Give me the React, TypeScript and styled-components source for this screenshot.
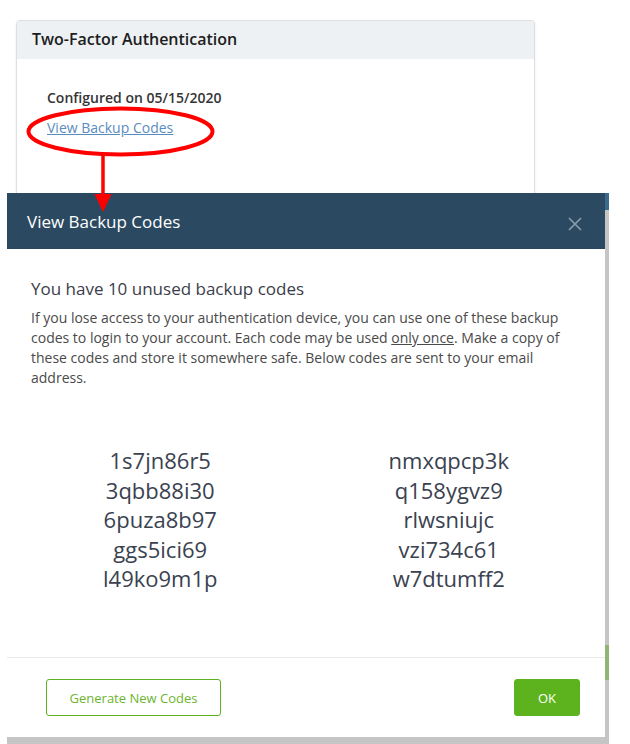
import React from 'react';
import styled, { createGlobalStyle } from 'styled-components';

const GlobalStyle = createGlobalStyle`
  html, body {
    margin: 0;
    padding: 0;
    background: #ffffff;
  }
  body {
    font-family: 'Open Sans', 'Liberation Sans', sans-serif;
  }
`;

const Page = styled.div`
  position: relative;
  width: 630px;
  height: 744px;
  overflow: hidden;
  background: #ffffff;
`;

const Card = styled.div`
  box-sizing: border-box;
  width: 519px;
  height: 200px;
  margin: 20px 0 0 16px;
  border: 1px solid #dcdfe3;
  border-radius: 4px;
  box-shadow: 0 1px 3px rgba(0, 0, 0, 0.08);
  background: #ffffff;
  overflow: hidden;
`;

const CardHeader = styled.div`
  height: 38px;
  display: flex;
  align-items: center;
  padding: 0 15px;
  background: #eef1f4;
  font-size: 16px;
  font-weight: 600;
  color: #1d1d1d;

  span {
    margin-top: -2px;
  }
`;

const CardBody = styled.div`
  padding: 29px 30px;
  display: flex;
  flex-direction: column;
  align-items: flex-start;
  gap: 10px;
`;

const Configured = styled.div`
  font-size: 14px;
  font-weight: 600;
  line-height: 20px;
  color: #353535;
`;

const Link = styled.a`
  font-size: 14px;
  line-height: 20px;
  color: #5a8cc0;
  text-decoration: underline;
  cursor: pointer;
`;

const Backdrop = styled.div`
  position: absolute;
  left: 7px;
  top: 193px;
  width: 602px;
  height: 551px;
  background: linear-gradient(#3a6a8e 0, #3a6a8e 17px, #c5c5c5 17px);
  z-index: 5;
`;

const SideGreen = styled.div`
  position: absolute;
  right: 0;
  top: 452px;
  width: 4px;
  height: 35px;
  background: #8fb474;
`;

const Modal = styled.div`
  width: 598px;
  height: 544px;
  background: #ffffff;
  display: flex;
  flex-direction: column;
`;

const ModalHeader = styled.div`
  height: 56px;
  flex-shrink: 0;
  display: flex;
  align-items: center;
  justify-content: space-between;
  padding: 0 23px 0 20px;
  background: #2b4a61;
`;

const ModalTitle = styled.div`
  font-size: 17px;
  color: #ffffff;
`;

const CloseButton = styled.button`
  border: none;
  background: none;
  padding: 0;
  margin-top: 6px;
  width: 14px;
  height: 14px;
  display: flex;
  cursor: pointer;
`;

const ModalBody = styled.div`
  flex: 1;
  padding: 28px 24px 0;
`;

const Heading = styled.h3`
  margin: 0 0 7px;
  font-size: 17px;
  font-weight: 400;
  line-height: 24px;
  color: #3b3d4a;
`;

const Text = styled.p`
  margin: 0;
  font-size: 14px;
  line-height: 20px;
  color: #4a4a4a;

  u {
    text-decoration: underline;
  }
`;

const CodeGrid = styled.div`
  display: grid;
  grid-template-columns: 1fr 1fr;
  margin: 58px -12px 0 -15px;
`;

const CodeColumn = styled.div`
  display: flex;
  flex-direction: column;
  align-items: center;
`;

const Code = styled.div`
  font-size: 22px;
  line-height: 29.5px;
  color: #3a4250;
`;

const ModalFooter = styled.div`
  display: flex;
  justify-content: space-between;
  align-items: center;
  padding: 21px 25px 21px 39px;
  border-top: 1px solid #e8e8e8;
`;

const Button = styled.button<{ $primary?: boolean }>`
  box-sizing: border-box;
  height: 37px;
  border-radius: 3px;
  border: 1px solid #5db31f;
  font-family: 'Open Sans', 'Liberation Sans', sans-serif;
  font-size: 13px;
  cursor: pointer;
  width: ${(p) => (p.$primary ? '66px' : '175px')};
  background: ${(p) => (p.$primary ? '#5db31d' : '#ffffff')};
  color: ${(p) => (p.$primary ? '#ffffff' : '#6bb52f')};
`;

const Annotation = styled.svg`
  position: absolute;
  left: 0;
  top: 0;
  z-index: 10;
  pointer-events: none;
`;

const leftCodes = ['1s7jn86r5', '3qbb88i30', '6puza8b97', 'ggs5ici69', 'l49ko9m1p'];
const rightCodes = ['nmxqpcp3k', 'q158ygvz9', 'rlwsniujc', 'vzi734c61', 'w7dtumff2'];

const App: React.FC = () => {
  return (
    <Page>
      <GlobalStyle />
      <Card>
        <CardHeader>
          <span>Two-Factor Authentication</span>
        </CardHeader>
        <CardBody>
          <Configured>Configured on 05/15/2020</Configured>
          <Link>View Backup Codes</Link>
        </CardBody>
      </Card>

      <Backdrop>
        <SideGreen />
        <Modal>
          <ModalHeader>
            <ModalTitle>View Backup Codes</ModalTitle>
            <CloseButton aria-label="Close">
              <svg width="14" height="14" viewBox="0 0 14 14">
                <path d="M1 1L13 13M13 1L1 13" stroke="#8a9dab" strokeWidth="1.6" />
              </svg>
            </CloseButton>
          </ModalHeader>
          <ModalBody>
            <Heading>You have 10 unused backup codes</Heading>
            <Text>
              If you lose access to your authentication device, you can use one of these backup
              codes to login to your account. Each code may be used <u>only once</u>. Make a copy of
              these codes and store it somewhere safe. Below codes are sent to your email
              address.
            </Text>
            <CodeGrid>
              <CodeColumn>
                {leftCodes.map((c) => (
                  <Code key={c}>{c}</Code>
                ))}
              </CodeColumn>
              <CodeColumn>
                {rightCodes.map((c) => (
                  <Code key={c}>{c}</Code>
                ))}
              </CodeColumn>
            </CodeGrid>
          </ModalBody>
          <ModalFooter>
            <Button>Generate New Codes</Button>
            <Button $primary>OK</Button>
          </ModalFooter>
        </Modal>
      </Backdrop>

      <Annotation width="630" height="744" viewBox="0 0 630 744">
        <ellipse cx="120.5" cy="131.5" rx="92" ry="23" fill="none" stroke="#ff0000" strokeWidth="4" />
        <line x1="103" y1="156" x2="103" y2="196" stroke="#ff0000" strokeWidth="3.5" />
        <polygon points="94.5,194 111.5,194 103,212" fill="#ff0000" />
      </Annotation>
    </Page>
  );
};

export default App;
